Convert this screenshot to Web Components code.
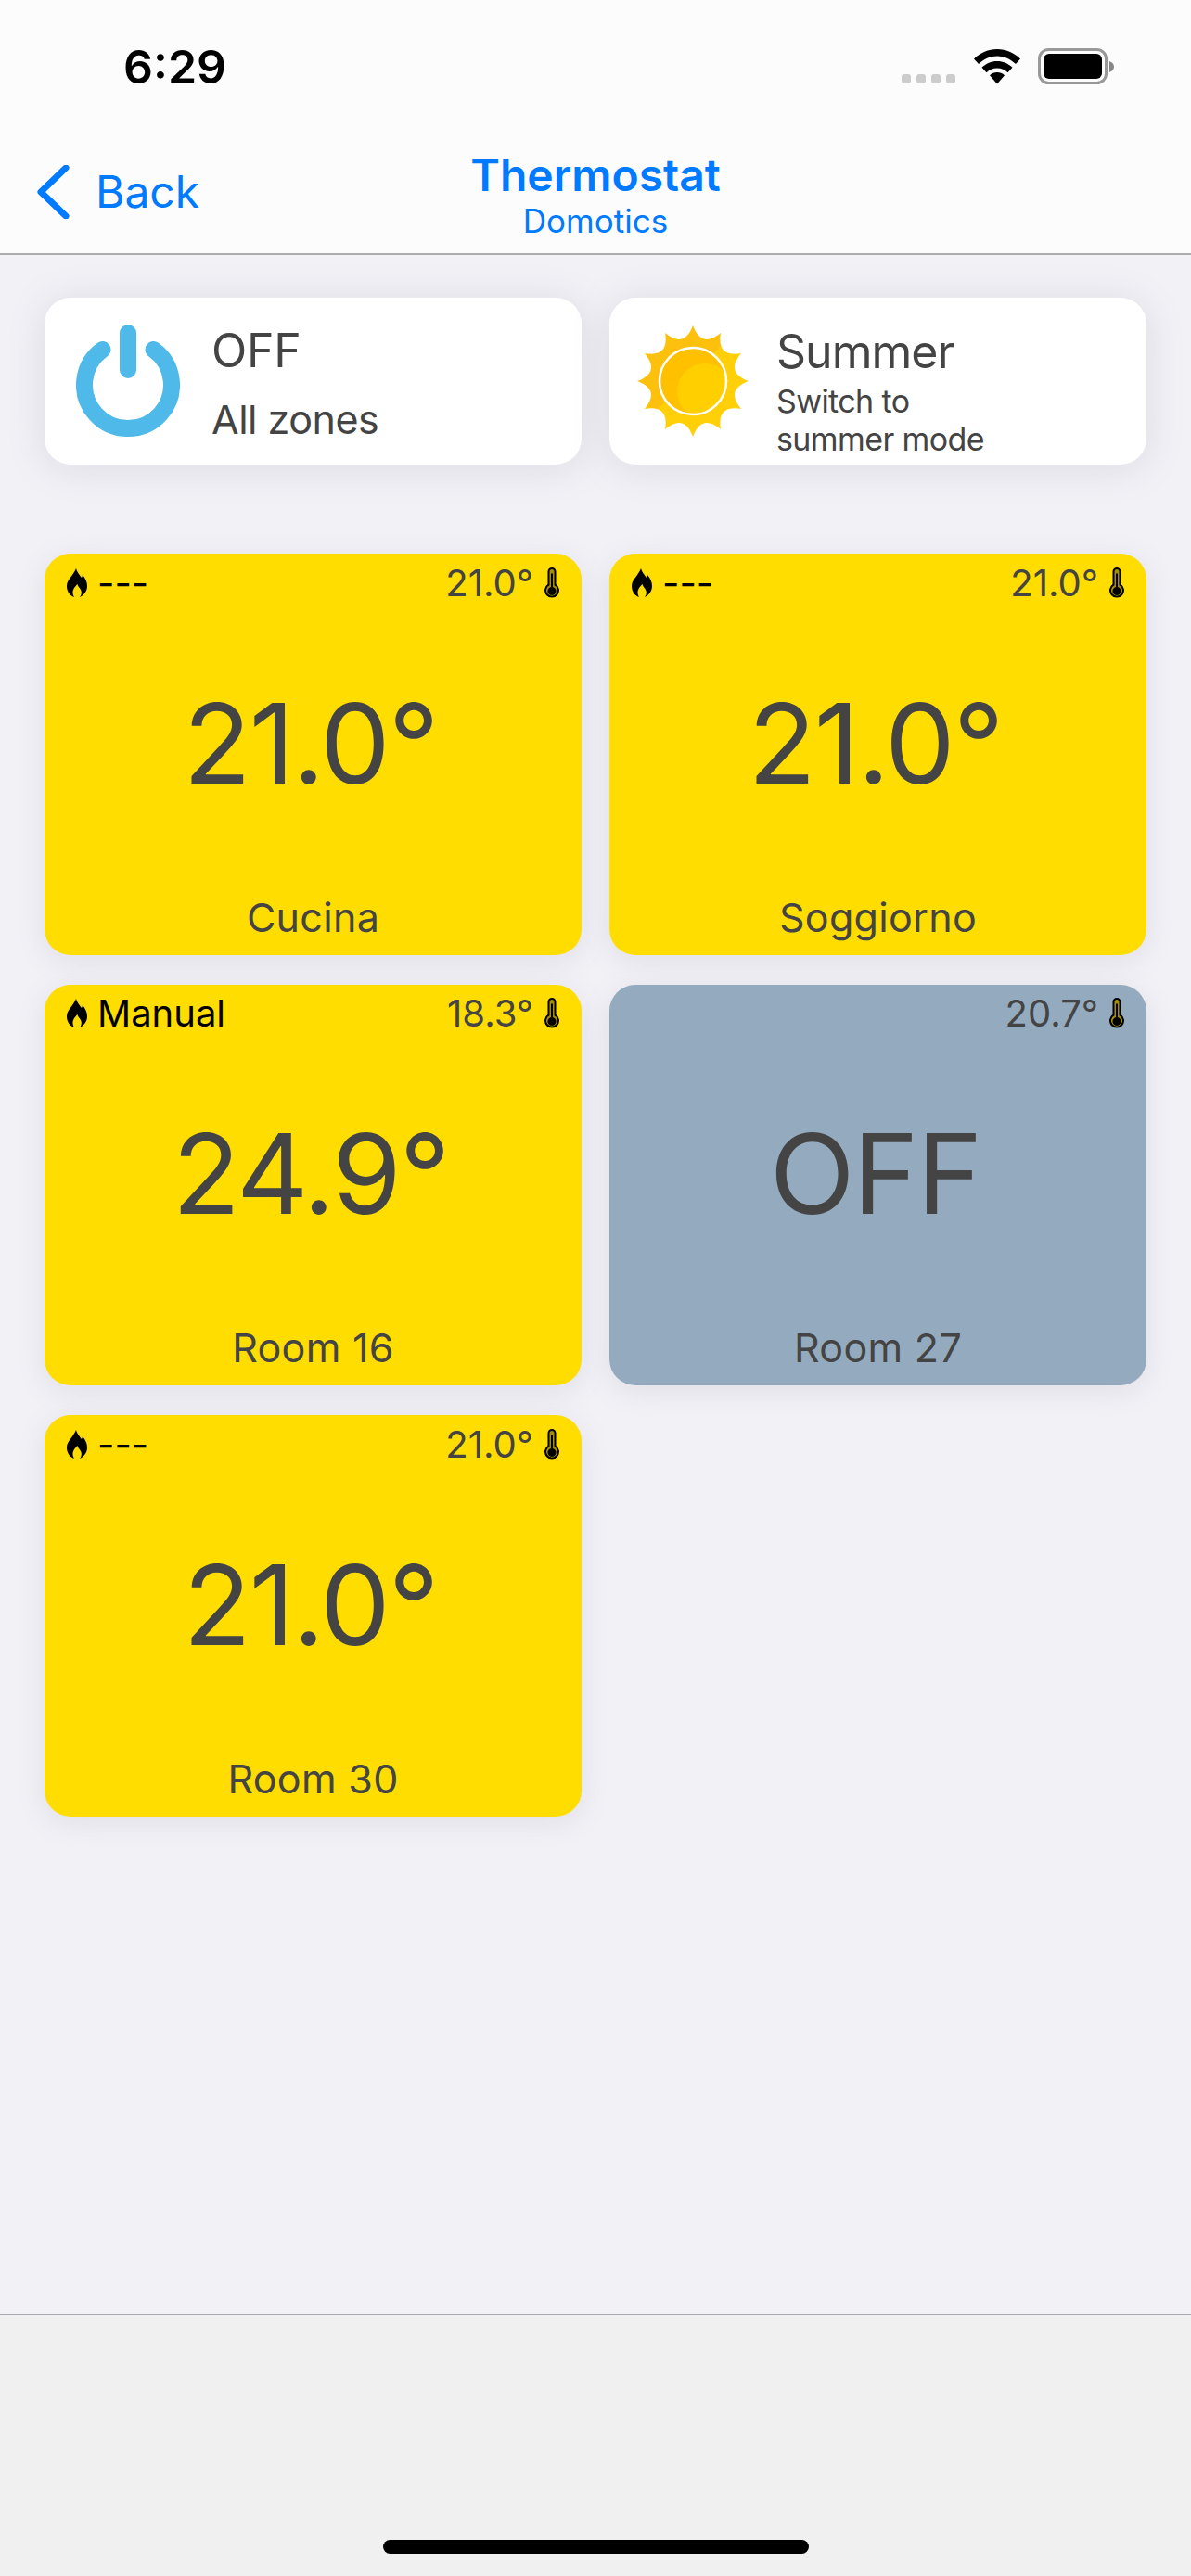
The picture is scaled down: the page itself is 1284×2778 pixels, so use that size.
<!DOCTYPE html>
<html lang="en">
<head>
<meta charset="utf-8">
<title>Thermostat</title>
<style>
  html, body { margin: 0; padding: 0; background: #f2f1f6; }
  body { font-family: Inter, "Liberation Sans", Arial, sans-serif; }
</style>
</head>
<body>
<thermostat-app>
  <status-bar slot="top" time="6:29"></status-bar>
  <nav-bar slot="top" back="Back" heading="Thermostat" sub="Domotics"></nav-bar>

  <action-card slot="actions" title-text="OFF" kind="plain">
    <power-icon slot="icon"></power-icon>
    All zones
  </action-card>
  <action-card slot="actions" title-text="Summer" kind="small">
    <sun-icon slot="icon"></sun-icon>
    Switch to<br>summer mode
  </action-card>

  <zone-tile slot="zones" mode="---" current="21.0°" target="21.0°" name="Cucina"></zone-tile>
  <zone-tile slot="zones" mode="---" current="21.0°" target="21.0°" name="Soggiorno"></zone-tile>
  <zone-tile slot="zones" mode="Manual" current="18.3°" target="24.9°" name="Room 16"></zone-tile>
  <zone-tile slot="zones" off current="20.7°" target="OFF" name="Room 27"></zone-tile>
  <zone-tile slot="zones" mode="---" current="21.0°" target="21.0°" name="Room 30"></zone-tile>
</thermostat-app>

<script>
function define(name, css, html, setup) {
  customElements.define(name, class extends HTMLElement {
    connectedCallback() {
      if (this.shadowRoot) return;
      const shadow = this.attachShadow({ mode: 'open' });
      shadow.innerHTML = `<style>${css}</style>${typeof html === 'function' ? html(this) : html}`;
      if (setup) setup(shadow, this);
    }
  });
}

define('thermostat-app', `
  :host {
    display: flex; flex-direction: column;
    height: 2778px; overflow: hidden;
    background: #f2f1f6; color: #444;
  }
  header { border-bottom: 2px solid #adadb0; background: #fcfcfd; }
  main { flex: 1; padding: 46px 48px 0; }
  .actions { display: grid; grid-template-columns: 579px 579px; gap: 30px; margin-bottom: 96px; }
  .zones { display: grid; grid-template-columns: 579px 579px; grid-auto-rows: 432.500px; gap: 32px 30px; }
  footer {
    height: 283px; box-sizing: border-box;
    border-top: 2px solid #a9a9b0; background: #f0f0f0;
    display: flex; justify-content: center; align-items: flex-end; padding-bottom: 24px;
  }
  .home { width: 459px; height: 15px; border-radius: 8px; background: #000; }
`, `
  <header><slot name="top"></slot></header>
  <main>
    <div class="actions"><slot name="actions"></slot></div>
    <div class="zones"><slot name="zones"></slot></div>
  </main>
  <footer><div class="home"></div></footer>
`);

define('status-bar', `
  :host { display: flex; align-items: center; height: 144px; box-sizing: border-box; padding: 0 82px 0 133px; position: relative; }
  .time { font: 600 50px/1 Inter, "Liberation Sans", sans-serif; color: #000; flex: 1; }
  .icons { display: flex; align-items: flex-start; height: 40px; }
  .dots { display: flex; gap: 6px; margin: 28px 20px 0 0; }
  .dots i { width: 10px; height: 10px; border-radius: 3px; background: #ccc; }
  svg { display: block; }
  .wifi { margin: 1px 19px 0 0; }
`, el => `
  <div class="time">${el.getAttribute('time')}</div>
  <div class="icons">
    <div class="dots"><i></i><i></i><i></i><i></i></div>
    <svg class="wifi" width="50" height="38" viewBox="0 0 50 38">
      <path fill="#000" d="M25 0C15.500 0 7 3.700 0 10.500L5 16C10.500 10.800 17.500 7.500 25 7.500S39.500 10.800 45 16L50 10.500C43 3.700 34.500 0 25 0Z"/>
      <path fill="#000" d="M25 13C18.500 13 13 15.500 8.500 19.800L13.500 25.300C16.500 22.500 20.500 20.500 25 20.500S33.500 22.500 36.500 25.300L41.500 19.800C37 15.500 31.500 13 25 13Z"/>
      <path fill="#000" d="M25 25C22 25 19.300 26.200 17 28.200L25 37.500L33 28.200C30.700 26.200 28 25 25 25Z"/>
    </svg>
    <svg width="83" height="40" viewBox="0 0 83 40">
      <rect x="1.500" y="1.500" width="72" height="36" rx="10" fill="none" stroke="#999" stroke-width="3"/>
      <rect x="6" y="6" width="63" height="27" rx="6" fill="#000"/>
      <path fill="#888" d="M77 14C80 15 82 17 82 20S80 25 77 26Z"/>
    </svg>
  </div>
`);

define('nav-bar', `
  :host { display: block; height: 129px; position: relative; color: #007aff; }
  .bar { display: grid; grid-template-columns: 1fr auto 1fr; height: 100%; }
  .back { display: flex; align-items: flex-start; padding: 34px 0 0 38px; gap: 27px; font-size: 48px; line-height: 57px; }
  .back svg { display: block; }
  .title { text-align: center; padding-top: 20px; }
  .heading { font-weight: 600; font-size: 48px; line-height: 50px; }
  .sub { font-size: 35px; line-height: 38px; margin-top: 5px; }
`, el => `
  <div class="bar">
    <div class="back">
      <svg width="38" height="58" viewBox="0 0 38 58"><path d="M33 3L6 29L33 55" fill="none" stroke="#007aff" stroke-width="7" stroke-linecap="round" stroke-linejoin="round"/></svg>
      <span>${el.getAttribute('back')}</span>
    </div>
    <div class="title">
      <div class="heading">${el.getAttribute('heading')}</div>
      <div class="sub">${el.getAttribute('sub')}</div>
    </div>
    <div></div>
  </div>
`);

define('action-card', `
  :host {
    display: flex; align-items: center; height: 180px; box-sizing: border-box;
    background: #fff; border-radius: 28px; color: #444;
    box-shadow: 0 4px 40px rgba(120, 120, 140, .18);
    padding-left: 30px;
  }
  .icon { width: 120px; flex: none; }
  .text { margin-left: 30px; margin-top: 3px; }
  .name { font-size: 50px; line-height: 60px; letter-spacing: -.2px; }
  .desc { font-size: 43px; line-height: 50px; margin-top: 19px; letter-spacing: -.5px; }
  :host([kind="small"]) .text { margin-left: 30px; margin-top: 21px; }
  :host([kind="small"]) .name { letter-spacing: -1px; }
  :host([kind="small"]) .desc { font-size: 34px; line-height: 41px; margin-top: 3px; letter-spacing: -.6px; }
`, el => `
  <div class="icon"><slot name="icon"></slot></div>
  <div class="text">
    <div class="name">${el.getAttribute('title-text')}</div>
    <div class="desc"><slot></slot></div>
  </div>
`);

define('power-icon', `
  :host { display: block; } svg { display: block; margin: 0 0 0 4px; }
`, `
  <svg width="112" height="122" viewBox="0 0 112 122">
    <path d="M28.500 27A47 47 0 1 0 83.500 27" fill="none" stroke="#4fb9e9" stroke-width="18" stroke-linecap="round"/>
    <path d="M56 9V49" fill="none" stroke="#4fb9e9" stroke-width="18" stroke-linecap="round"/>
  </svg>
`);

define('sun-icon', `
  :host { display: block; } svg { display: block; }
`, () => {
  let d = '';
  for (let i = 0; i < 12; i++) {
    const a = i * Math.PI / 6;
    const b = a + Math.PI / 12;
    const tip = [60 + 60 * Math.sin(a), 60 - 60 * Math.cos(a)];
    const next = [60 + 60 * Math.sin(a + Math.PI / 6), 60 - 60 * Math.cos(a + Math.PI / 6)];
    const ctl = [60 + 36 * Math.sin(b), 60 - 36 * Math.cos(b)];
    d += (i === 0 ? `M${tip[0].toFixed(1)} ${tip[1].toFixed(1)}` : '') + `Q${ctl[0].toFixed(1)} ${ctl[1].toFixed(1)} ${next[0].toFixed(1)} ${next[1].toFixed(1)}`;
  }
  return `<svg width="120" height="120" viewBox="0 0 120 120">
    <defs>
      <linearGradient id="rays" x1="0" y1="0" x2="1" y2="1">
        <stop offset=".47" stop-color="#fdc00c"/><stop offset=".47" stop-color="#ffd008"/>
      </linearGradient>
      <clipPath id="disc"><circle cx="60" cy="60" r="36"/></clipPath>
    </defs>
    <path d="${d}Z" fill="url(#rays)"/>
    <circle cx="60" cy="60" r="36" fill="#ffc000"/>
    <circle cx="73" cy="71" r="30" fill="#ffcf00" clip-path="url(#disc)"/>
    <circle cx="60" cy="60" r="36" fill="none" stroke="#fff" stroke-width="2.500"/>
  </svg>`;
});

define('zone-tile', `
  :host {
    display: flex; flex-direction: column; box-sizing: border-box;
    background: #ffdd00; border-radius: 28px; color: #444;
    box-shadow: 0 6px 30px rgba(120, 120, 140, .15);
    padding: 0 24px;
  }
  :host([off]) { background: #94abbf; }
  .top { display: flex; align-items: center; height: 62px; }
  .mode { flex: 1; display: flex; align-items: center; gap: 11px; font-size: 40px; color: #000; }
  .cur { font-size: 40px; display: flex; align-items: center; gap: 12px; }
  svg { display: block; }
  .big { flex: 1; display: flex; align-items: center; justify-content: center; font-size: 120px; font-weight: 385; line-height: 1; letter-spacing: -2px; padding: 0 6px 19px 0; }
  .name { font-size: 43px; line-height: 50px; text-align: center; margin-bottom: 16px; letter-spacing: .3px; }
`, el => {
  const off = el.hasAttribute('off');
  const flame = `<svg width="22" height="31" viewBox="0 0 22 31"><path fill="#000" fill-rule="evenodd" d="M10 0C11.500 5 14 7 16 10C16.500 9 17 8 17 7C20 10.500 22 14.500 22 19C22 25 18 29 14 31C16 28.500 16.500 25.500 15 23C14 21 12 19.500 11.500 17C9.500 19 6.500 22 6.500 26C6.500 27.500 7 29.500 8 31C3.500 29.500 0 25 0 19C0 12 7 8 10 0Z"/></svg>`;
  const thermo = `<svg width="16" height="33" viewBox="0 0 16 33"><path fill="#000" d="M3.500 4.500a4.500 4.500 0 0 1 9 0V18a8 8 0 1 1-9 0Z"/><path fill="#a58f00" d="M5.500 4.500a2.500 2.500 0 0 1 5 0V19.200a6 6 0 1 1-5 0Z"/><path fill="#000" d="M7 6.500h2V21a4.500 4.500 0 1 1-2 0Z"/></svg>`;
  return `
    <div class="top">
      <div class="mode">${off ? '' : flame + '<span>' + el.getAttribute('mode') + '</span>'}</div>
      <div class="cur"><span>${el.getAttribute('current')}</span>${thermo}</div>
    </div>
    <div class="big">${el.getAttribute('target')}</div>
    <div class="name">${el.getAttribute('name')}</div>`;
});
</script>
</body>
</html>
